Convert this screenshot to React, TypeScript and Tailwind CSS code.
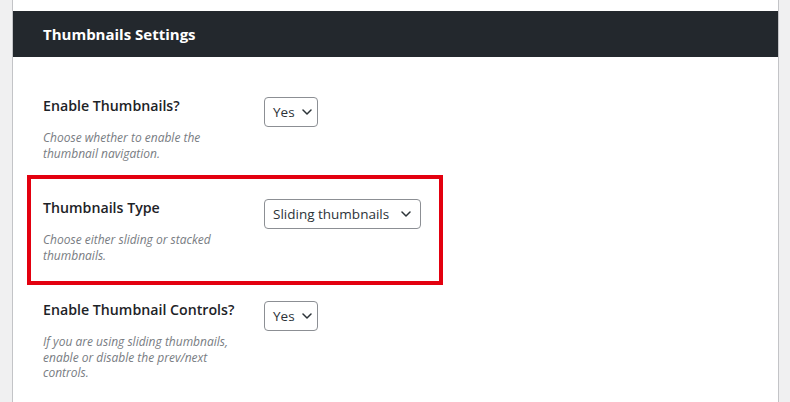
import type { ReactNode } from 'react'

function Chevron() {
  return (
    <svg width="10" height="6" viewBox="0 0 10 6" fill="none" className="shrink-0">
      <path d="M1 1l4 4 4-4" stroke="#2c3338" strokeWidth="1.5" strokeLinecap="round" strokeLinejoin="round" />
    </svg>
  )
}

function Select({ value, wide }: { value: string; wide?: boolean }) {
  return (
    <div
      className={
        'flex h-[30px] items-center rounded-[4px] border border-[#8c8f94] bg-white pl-[8px] text-[13.5px] text-[#2c3338] ' +
        (wide ? 'w-[157px] justify-between pr-[9px]' : 'w-[54px] gap-[7px] pr-[8px]')
      }
    >
      <span>{value}</span>
      <Chevron />
    </div>
  )
}

function Row({ label, children, select }: { label: string; children: ReactNode; select: ReactNode }) {
  return (
    <div className="flex items-start">
      <div className="w-[221px]">
        <div className="text-[14.2px] font-semibold leading-[18px] text-[#1d2327]">{label}</div>
        <p className="mt-[15px] w-[190px] text-[12px] italic leading-[15.5px] text-[#787c82]">{children}</p>
      </div>
      {select}
    </div>
  )
}

export default function App() {
  return (
    <div
      className="h-[402px] w-[790px] overflow-hidden bg-[#f0f0f1] pl-[12px] pr-[11px]"
      style={{ fontFamily: '"Open Sans", "Noto Sans", sans-serif' }}
    >
      <div className="h-full border-x border-[#c3c4c7] bg-white pt-[11px]">
        <div className="flex h-[46px] items-center bg-[#23282d] pl-[30px] text-[15px] font-bold text-white">
          Thumbnails Settings
        </div>

        <div className="flex flex-col gap-[38px] pl-[30px] pt-[40px]">
          <Row label="Enable Thumbnails?" select={<Select value="Yes" />}>
            Choose whether to enable the thumbnail navigation.
          </Row>

          <div className="relative">
            <Row label="Thumbnails Type" select={<Select value="Sliding thumbnails" wide />}>
              Choose either sliding or stacked thumbnails.
            </Row>
            {/* annotation box */}
            <div className="pointer-events-none absolute left-[-16px] top-[-24px] h-[110px] w-[416px] border-[4px] border-[#e3000f]" />
          </div>

          <Row label="Enable Thumbnail Controls?" select={<Select value="Yes" />}>
            If you are using sliding thumbnails, enable or disable the prev/next controls.
          </Row>
        </div>
      </div>
    </div>
  )
}
